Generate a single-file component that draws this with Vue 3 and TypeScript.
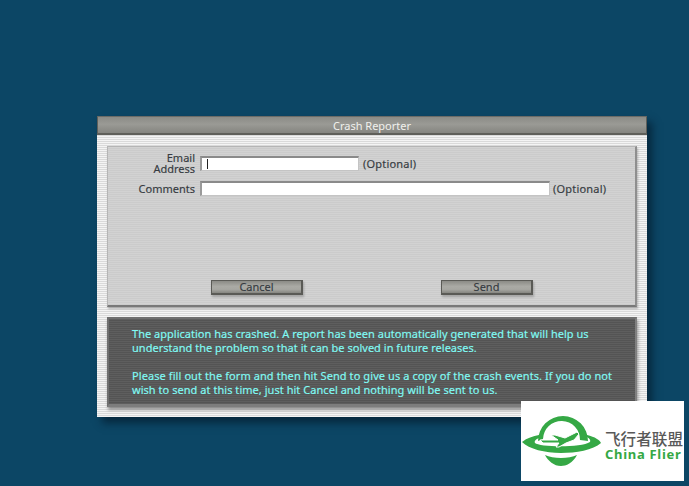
<script setup lang="ts">
const title = 'Crash Reporter'
</script>

<template>
  <div class="page">
    <section class="window">
      <header class="titlebar">{{ title }}</header>
      <div class="body">
        <form class="form" @submit.prevent>
          <div class="row">
            <label class="label two">Email<br />Address</label>
            <div class="input email"><span class="caret"></span></div>
            <span class="opt opt-email">(Optional)</span>
          </div>
          <div class="row row-comments">
            <label class="label">Comments</label>
            <div class="input comments"></div>
            <span class="opt">(Optional)</span>
          </div>
          <div class="buttons">
            <button type="button" class="btn">Cancel</button>
            <button type="button" class="btn">Send</button>
          </div>
        </form>
        <div class="message">
          <p>The application has crashed. A report has been automatically generated that will help us<br />understand the problem so that it can be solved in future releases.</p>
          <p><span class="wide">Please fill out the form and then hit Send to give us a copy of the crash events. If you do not</span><br /><span class="mid">wish to send at this time, just hit Cancel and nothing will be sent to us.</span></p>
        </div>
      </div>
    </section>
    <aside class="logo">
      <svg class="mark" width="82" height="80" viewBox="0 0 82 80">
        <path d="M17 40 A25 25 0 0 1 67 40 L59 39 A18.5 18.5 0 0 0 22 38 Z" fill="#35a845" />
        <path d="M1 41 C6 37 12 35 18 34 L18 37 C15 38 13 40 14 42 C18 46 60 47 69 41 C70 39 68 37 66 36 L66 34 C74 36 79 39 80 42 C72 49 55 52 40 52 C24 52 8 48 1 41 Z" fill="#35a845" />
        <path d="M24 54 C32 58 48 58 56 54 C52 62 45 65 40 65 C33 65 27 60 24 54 Z" fill="#35a845" />
        <path d="M19 39 L37 39 L30 34 L34 34 L44 37 L56 31 L58 33 L53 39 L45 42 L38 46 L35 46 L38 42 L22 42 Z" fill="#35a845" stroke="#fff" stroke-width="1" />
      </svg>
      <div class="brand">
        <div class="cn">飞行者联盟</div>
        <div class="en">China Flier</div>
      </div>
    </aside>
  </div>
</template>

<style>
html, body { margin: 0; background: #0c4665; overflow: hidden; }
</style>

<style scoped>
.page {
  position: relative;
  width: 689px;
  height: 486px;
  box-sizing: border-box;
  padding: 116px 0 0 97px;
  background: #0c4665;
  font-family: "Noto Sans", "DejaVu Sans", sans-serif;
  font-size: 11px;
  overflow: hidden;
}
.window {
  width: 550px;
  height: 301px;
  box-sizing: border-box;
  background: repeating-linear-gradient(#f4f4f4 0 1px, #dadada 1px 2px);
  box-shadow: 5px 6px 8px rgba(4, 30, 48, 0.75);
}
.titlebar {
  height: 19px;
  box-sizing: border-box;
  border: 1px solid #5f5f5a;
  border-top-color: #6b6b67;
  border-bottom-width: 2px;
  background: linear-gradient(#8b8b86, #9a9a95 45%, #858580);
  color: #f0f0ec;
  text-align: center;
  line-height: 17px;
}
.body {
  padding: 11px 10px 0;
  display: flex;
  flex-direction: column;
  gap: 10px;
}
.form {
  height: 161px;
  box-sizing: border-box;
  display: flex;
  flex-direction: column;
  padding: 9px 0 0;
  background: repeating-linear-gradient(#d2d2d2 0 1px, #cbcbcb 1px 2px);
  border: 1px solid #b5b5b5;
  border-right: 2px solid #8e8e8e;
  border-bottom: 2px solid #787878;
  box-shadow: 1px 2px 2px rgba(110, 110, 110, 0.45);
  color: #363b41;
  -webkit-text-stroke: 0.15px currentColor;
}
.row {
  display: flex;
  align-items: center;
  height: 15px;
}
.row-comments { margin-top: 10px; }
.label {
  width: 87px;
  flex: none;
  text-align: right;
  line-height: 11px;
  padding-right: 5px;
}
.two { padding-bottom: 2px; }
.input {
  height: 15px;
  box-sizing: border-box;
  flex: none;
  background: #fff;
  border: 1px solid #c4c4c4;
  border-top: 2px solid #8a8a8a;
  border-left: 2px solid #9a9a9a;
  display: flex;
  align-items: center;
  padding-left: 5px;
}
.email { width: 159px; }
.comments { width: 350px; }
.caret {
  width: 1px;
  height: 10px;
  background: #222;
}
.opt { margin-left: 3px; white-space: nowrap; letter-spacing: 0.2px; }
.opt-email { margin-left: 4px; }
.buttons {
  margin-top: auto;
  margin-bottom: 10px;
  padding-left: 103px;
  display: flex;
  gap: 138px;
}
.btn {
  width: 92px;
  height: 15px;
  padding: 0;
  font: inherit;
  color: #363b41;
  line-height: 10px;
  border: 1px solid #5a5a56;
  border-bottom-width: 2px;
  border-right-width: 2px;
  background: linear-gradient(#8b8b86, #aaaaa5 45%, #a6a6a1 70%, #868681);
  box-shadow: 1px 2px 2px rgba(100, 100, 100, 0.4);
}
.message {
  height: 90px;
  box-sizing: border-box;
  padding: 8px 20px 0 23px;
  background: repeating-linear-gradient(#5e5e5e 0 1px, #545454 1px 2px);
  border: 2px solid #6f6f6f;
  border-right-color: #7f7f7f;
  border-bottom: 3px solid #7d7d7d;
  box-shadow: 1px 3px 3px rgba(90, 90, 90, 0.6);
  color: #80fbf5;
  line-height: 14px;
  letter-spacing: 0.02px;
  -webkit-text-stroke: 0.15px currentColor;
}
.message p { margin: 0 0 14px; white-space: nowrap; }
.wide { letter-spacing: 0.085px; }
.mid { letter-spacing: 0.04px; }
.logo {
  position: absolute;
  left: 521px;
  top: 401px;
  width: 163px;
  height: 80px;
  background: #fff;
  display: flex;
  align-items: flex-start;
}
.mark { flex: none; }
.brand { margin: 29px 0 0 2px; white-space: nowrap; }
.cn {
  font-family: "Noto Sans CJK SC", sans-serif;
  font-size: 15.6px;
  line-height: 17px;
  font-weight: 500;
  color: #595959;
}
.en {
  font-family: "Noto Sans", sans-serif;
  font-size: 13px;
  line-height: 15px;
  font-weight: 700;
  color: #35a845;
  letter-spacing: 0.7px;
}
</style>
